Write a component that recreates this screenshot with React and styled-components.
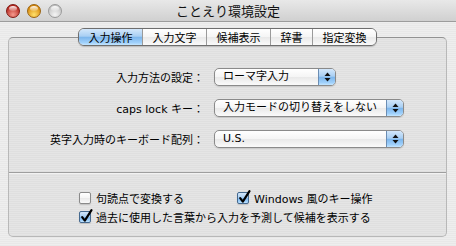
import React from 'react';
import styled, { createGlobalStyle } from 'styled-components';

const Global = createGlobalStyle`
  html, body { margin: 0; padding: 0; }
  body {
    width: 456px; height: 246px; overflow: hidden;
    font-family: "DejaVu Sans", "Noto Sans CJK JP", sans-serif;
    color: #000;
  }
`;

const AQUA = 'linear-gradient(to bottom, #d3e7fb 0%, #a9cff3 45%, #7db6ec 52%, #9fd0fb 85%, #c4e6ff 100%)';
const WHITE = 'linear-gradient(to bottom, #ffffff 0%, #f5f5f5 48%, #e9e9e9 52%, #fafafa 100%)';

const Window = styled.div`
  width: 456px; height: 246px;
  display: flex; flex-direction: column;
  background: repeating-linear-gradient(to bottom, #eeeeee 0px, #eeeeee 1px, #e8e8e8 1px, #e8e8e8 2px);
`;

const TitleBar = styled.div`
  height: 22px; box-sizing: border-box;
  display: grid; grid-template-columns: 1fr auto 1fr; align-items: center;
  background: linear-gradient(to bottom, #e8e8e8, #d0d0d0);
  border-bottom: 1px solid #9c9c9c;
`;

const Lights = styled.div`
  display: flex; gap: 7px; padding-left: 6px; align-items: center;
`;

const Light = styled.span`
  width: 14px; height: 14px; border-radius: 50%; box-sizing: border-box; position: relative;
  border: 1px solid ${p => p.$edge};
  background: radial-gradient(circle at 50% 80%, ${p => p.$glow} 0%, ${p => p.$base} 75%);
  &::after {
    content: ''; position: absolute; left: 50%; top: 1px; transform: translateX(-50%);
    width: 8px; height: 5px; border-radius: 50%;
    background: linear-gradient(to bottom, rgba(255,255,255,0.95), rgba(255,255,255,0.15));
  }
`;

const Title = styled.div`
  font-family: "Noto Sans CJK JP", sans-serif; font-size: 13px; line-height: 16px;
  color: #111;
`;

const Content = styled.div`
  flex: 1; display: flex; flex-direction: column;
  padding: 0 9px 9px 8px;
`;

const TabBar = styled.div`
  align-self: center; display: flex; height: 18px; box-sizing: border-box;
  margin-top: 6px; position: relative; z-index: 1;
  border: 1px solid #6e6e6e; border-radius: 6px; overflow: hidden;
  box-shadow: 0 1px 1px rgba(0,0,0,0.18);
`;

const Tab = styled.div`
  padding: 0 9.5px; display: flex; align-items: center;
  font-family: "Noto Sans CJK JP", sans-serif; font-size: 11px; line-height: 16px;
  background: ${p => (p.$active ? AQUA : WHITE)};
  & + & { border-left: 1px solid #9a9a9a; }
`;

const Group = styled.div`
  flex: 1; margin-top: -9px; box-sizing: border-box;
  border: 1px solid #b8b8b8; border-top-color: #929292; border-radius: 5px;
  background: rgba(0,0,0,0.035);
  display: flex; flex-direction: column;
  padding-top: 30px;
`;

const Form = styled.div`
  display: grid; grid-template-columns: 195px auto; column-gap: 10px; row-gap: 13px;
  align-items: center; justify-items: start;
`;

const Label = styled.span`
  justify-self: end; font-size: 11px; white-space: nowrap;
`;

const Popup = styled.div`
  width: ${p => p.$w}px; height: 18px; box-sizing: border-box; display: flex;
  border: 1px solid #8a8a8a; border-radius: 5px; overflow: hidden;
  background: ${WHITE};
  box-shadow: 0 1px 1px rgba(0,0,0,0.12);
`;

const PopupText = styled.span`
  flex: 1; padding-left: 8px; font-size: 11px; line-height: 16px; white-space: nowrap;
`;

const PopupArrow = styled.span`
  width: 16px; flex: none; border-left: 1px solid #6b8db3;
  background: ${AQUA};
  display: flex; align-items: center; justify-content: center;
`;

const Separator = styled.div`
  margin-top: 24px; height: 1px; background: #9e9e9e;
  box-shadow: 0 1px 0 rgba(255,255,255,0.6);
`;

const Checks = styled.div`
  display: grid; grid-template-columns: 158px auto; row-gap: 5px;
  padding: 18px 0 0 70px;
`;

const CheckRow = styled.label`
  display: flex; align-items: center; gap: 5px; height: 14px;
  font-size: 11px; white-space: nowrap;
  grid-column: ${p => (p.$wide ? '1 / span 2' : 'auto')};
`;

const Box = styled.span`
  width: 12px; height: 12px; box-sizing: border-box; flex: none; position: relative;
  border: 1px solid ${p => (p.$checked ? '#45698f' : '#8a8a8a')}; border-radius: 2px;
  background: ${p => (p.$checked ? AQUA : WHITE)};
  box-shadow: 0 1px 1px rgba(0,0,0,0.15);
`;

const Tick = styled.svg`
  position: absolute; left: 0px; top: -3px; overflow: visible;
`;

const Arrows = () => (
  <svg width="7" height="10" viewBox="0 0 7 10">
    <path d="M3.5 0.5 L6.5 4 L0.5 4 Z" fill="#111" />
    <path d="M3.5 9.5 L6.5 6 L0.5 6 Z" fill="#111" />
  </svg>
);

const Check = ({ checked, wide, children }) => (
  <CheckRow $wide={wide}>
    <Box $checked={checked}>
      {checked && (
        <Tick width="12" height="14" viewBox="0 0 12 14">
          <path d="M2.2 8.2 L4.8 11.6 L11.5 1.2" fill="none" stroke="#000" strokeWidth="2.2" strokeLinecap="round" strokeLinejoin="round" />
        </Tick>
      )}
    </Box>
    <span>{children}</span>
  </CheckRow>
);

const tabs = ['入力操作', '入力文字', '候補表示', '辞書', '指定変換'];

const rows = [
  { label: 'caps lock キー：', value: '入力モードの切り替えをしない', w: 190 },
];

export default function App() {
  return (
    <>
      <Global />
      <Window>
        <TitleBar>
          <Lights>
            <Light $base="#b5241c" $glow="#f59a8e" $edge="#7e1a14" />
            <Light $base="#d6870a" $glow="#ffe06a" $edge="#9b6410" />
            <Light $base="#c2c2c2" $glow="#f4f4f4" $edge="#9a9a9a" />
          </Lights>
          <Title>ことえり環境設定</Title>
          <div />
        </TitleBar>
        <Content>
          <TabBar>
            {tabs.map((t, i) => (
              <Tab key={t} $active={i === 0}>{t}</Tab>
            ))}
          </TabBar>
          <Group>
            <Form>
              <Label>入力方法の設定：</Label>
              <Popup $w={122}><PopupText>ローマ字入力</PopupText><PopupArrow><Arrows /></PopupArrow></Popup>
              {rows.map(r => (
                <React.Fragment key={r.label}>
                  <Label>{r.label}</Label>
                  <Popup $w={r.w}><PopupText>{r.value}</PopupText><PopupArrow><Arrows /></PopupArrow></Popup>
                </React.Fragment>
              ))}
              <Label>英字入力時のキーボード配列：</Label>
              <Popup $w={190}><PopupText>U.S.</PopupText><PopupArrow><Arrows /></PopupArrow></Popup>
            </Form>
            <Separator />
            <Checks>
              <Check>句読点で変換する</Check>
              <Check checked>Windows 風のキー操作</Check>
              <Check checked wide>過去に使用した言葉から入力を予測して候補を表示する</Check>
            </Checks>
          </Group>
        </Content>
      </Window>
    </>
  );
}
